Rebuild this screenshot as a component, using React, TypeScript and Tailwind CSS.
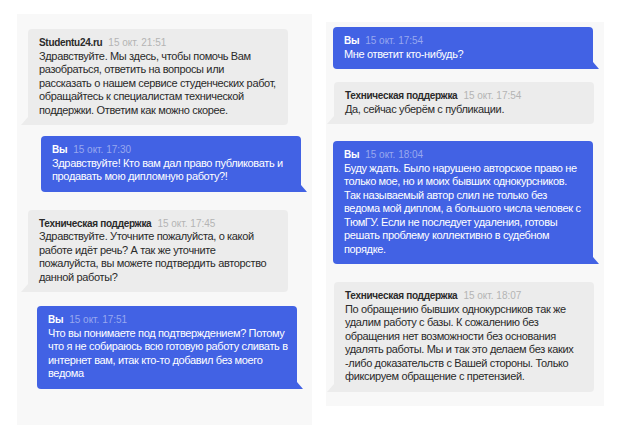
import React from 'react';

type Msg = {
  me: boolean;
  name: string;
  time: string;
  lines: string[];
  cls: string;
};

const left: Msg[] = [
  {
    me: false,
    name: 'Studentu24.ru',
    time: '15 окт. 21:51',
    cls: 'ml-[11px] mt-[15px]',
    lines: [
      'Здравствуйте. Мы здесь, чтобы помочь Вам',
      'разобраться, ответить на вопросы или',
      'рассказать о нашем сервисе студенческих работ,',
      'обращайтесь к специалистам технической',
      'поддержки. Ответим как можно скорее.',
    ],
  },
  {
    me: true,
    name: 'Вы',
    time: '15 окт. 17:30',
    cls: 'ml-[24px] mt-[11px]',
    lines: ['Здравствуйте! Кто вам дал право публиковать и', 'продавать мою дипломную работу?!'],
  },
  {
    me: false,
    name: 'Техническая поддержка',
    time: '15 окт. 17:45',
    cls: 'ml-[11px] mt-[18px]',
    lines: [
      'Здравствуйте. Уточните пожалуйста, о какой',
      'работе идёт речь? А так же уточните',
      'пожалуйста, вы можете подтвердить авторство',
      'данной работы?',
    ],
  },
  {
    me: true,
    name: 'Вы',
    time: '15 окт. 17:51',
    cls: 'ml-[20px] mt-[14px]',
    lines: [
      'Что вы понимаете под подтверждением? Потому',
      'что я не собираюсь всю готовую работу сливать в',
      'интернет вам, итак кто-то добавил без моего',
      'ведома',
    ],
  },
];

const right: Msg[] = [
  {
    me: true,
    name: 'Вы',
    time: '15 окт. 17:54',
    cls: 'ml-[7px] mt-[5px]',
    lines: ['Мне ответит кто-нибудь?'],
  },
  {
    me: false,
    name: 'Техническая поддержка',
    time: '15 окт. 17:54',
    cls: 'ml-[8px] mt-[13px]',
    lines: ['Да, сейчас уберём с публикации.'],
  },
  {
    me: true,
    name: 'Вы',
    time: '15 окт. 18:04',
    cls: 'ml-[7px] mt-[17px]',
    lines: [
      'Буду ждать. Было нарушено авторское право не',
      'только мое, но и моих бывших однокурсников.',
      'Так называемый автор слил не только без',
      'ведома мой диплом, а большого числа человек с',
      'ТюмГУ. Если не последует удаления, готовы',
      'решать проблему коллективно в судебном',
      'порядке.',
    ],
  },
  {
    me: false,
    name: 'Техническая поддержка',
    time: '15 окт. 18:07',
    cls: 'ml-[8px] mt-[18px]',
    lines: [
      'По обращению бывших однокурсников так же',
      'удалим работу с базы. К сожалению без',
      'обращения нет возможности без основания',
      'удалять работы. Мы и так это делаем без каких',
      '-либо доказательств с Вашей стороны. Только',
      'фиксируем обращение с претензией.',
    ],
  },
];

function Bubble({ m }: { m: Msg }) {
  return (
    <div
      className={`relative w-[260px] rounded-[4px] px-[11px] pt-[7px] pb-[8px] text-[11px] tracking-[-0.35px] leading-[13.5px] ${
        m.me ? 'bg-[#4262e4] text-white rounded-br-none' : 'bg-[#ececec] text-[#2a2a2a] rounded-bl-none'
      } ${m.cls}`}
    >
      <div className="whitespace-nowrap">
        <span className="font-bold text-[10px] tracking-[-0.3px]">{m.name}</span>
        <span className={`ml-[6px] text-[10px] tracking-[0px] ${m.me ? 'text-[#98a8ef]' : 'text-[#b4b4b4]'}`}>
          {m.time}
        </span>
      </div>
      {m.lines.map((l, i) => (
        <div key={i} className="whitespace-nowrap">{l}</div>
      ))}
      {m.me ? (
        <svg className="absolute -right-[6px] bottom-0" width="6" height="7" viewBox="0 0 6 7">
          <polygon points="0,0 6,7 0,7" fill="#4262e4" />
        </svg>
      ) : (
        <svg className="absolute -left-[7px] bottom-0" width="7" height="8" viewBox="0 0 7 8">
          <polygon points="7,0 7,8 0,8" fill="#ececec" />
        </svg>
      )}
    </div>
  );
}

export default function App() {
  return (
    <div className="w-[636px] h-[425px] bg-white overflow-hidden flex font-['Liberation_Sans',Arial,sans-serif]">
      <div className="ml-[17px] mt-[14px] w-[295px] h-[411px] bg-[#f8f8f8] flex flex-col">
        {left.map((m, i) => (
          <Bubble key={i} m={m} />
        ))}
      </div>
      <div className="ml-[14px] mt-[22px] w-[278px] h-[384px] bg-[#f8f8f8] flex flex-col">
        {right.map((m, i) => (
          <Bubble key={i} m={m} />
        ))}
      </div>
    </div>
  );
}
